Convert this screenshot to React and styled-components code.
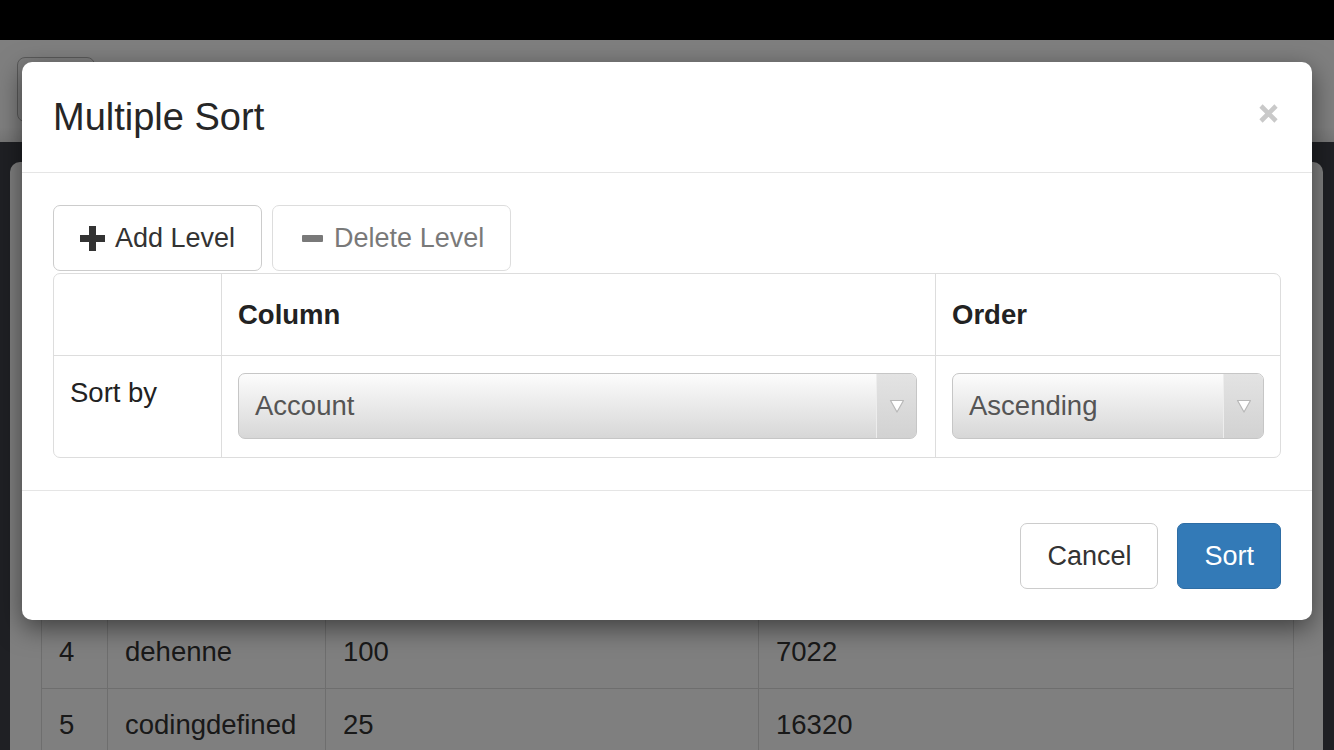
import React from "react";
import styled, { createGlobalStyle } from "styled-components";

const GlobalStyle = createGlobalStyle`
  html, body {
    margin: 0;
    padding: 0;
  }
  body {
    font-family: "Liberation Sans", Arial, Helvetica, sans-serif;
    background: #000;
    overflow: hidden;
  }
  * {
    box-sizing: border-box;
  }
`;

const accounts = [
  { id: 1, name: "johnsmith", amount: "500", balance: "12040" },
  { id: 2, name: "marylin", amount: "75", balance: "3380" },
  { id: 3, name: "peterpan", amount: "310", balance: "9105" },
  { id: 4, name: "dehenne", amount: "100", balance: "7022" },
  { id: 5, name: "codingdefined", amount: "25", balance: "16320" },
];

const PlusIcon = () => (
  <svg width="25" height="25" viewBox="0 0 25 25">
    <rect x="0" y="9" width="25" height="7" fill="currentColor" />
    <rect x="9" y="0" width="7" height="25" fill="currentColor" />
  </svg>
);

const MinusIcon = () => (
  <svg width="25" height="25" viewBox="0 0 25 25">
    <rect x="3" y="9" width="21" height="7" rx="1" fill="currentColor" />
  </svg>
);

const CloseIcon = () => (
  <svg width="19" height="19" viewBox="0 0 19 19">
    <path
      d="M2 2 L17 17 M17 2 L2 17"
      stroke="#c9c9c9"
      strokeWidth="4.6"
      strokeLinecap="butt"
    />
  </svg>
);

const Caret = () => (
  <svg width="16" height="15" viewBox="0 0 16 15">
    <polygon
      points="1.5,1.5 14.5,1.5 8,13"
      fill="#fff"
      stroke="#b8b8b8"
      strokeWidth="1.2"
      strokeLinejoin="round"
    />
  </svg>
);

const SelectBox = ({ value, width }) => (
  <Select $width={width}>
    <SelectValue>{value}</SelectValue>
    <SelectArrow>
      <Caret />
    </SelectArrow>
  </Select>
);

const App = () => {
  return (
    <Screen>
      <GlobalStyle />
      <StatusBar />
      <NavBar>
        <NavButton />
      </NavBar>
      <Main>
        <Card>
          <CardToolbar>
            <NavButton />
          </CardToolbar>
          <DataTable>
            <colgroup>
              <col style={{ width: 66 }} />
              <col style={{ width: 218 }} />
              <col style={{ width: 433 }} />
              <col style={{ width: 535 }} />
            </colgroup>
            <thead>
              <tr>
                <th>#</th>
                <th>Account</th>
                <th>Amount</th>
                <th>Balance</th>
              </tr>
            </thead>
            <tbody>
              {accounts.map((a) => (
                <tr key={a.id}>
                  <td>{a.id}</td>
                  <td>{a.name}</td>
                  <td>{a.amount}</td>
                  <td>{a.balance}</td>
                </tr>
              ))}
            </tbody>
          </DataTable>
        </Card>
      </Main>

      <Overlay>
        <Modal>
          <ModalHeader>
            <ModalTitle>Multiple Sort</ModalTitle>
            <CloseButton aria-label="Close">
              <CloseIcon />
            </CloseButton>
          </ModalHeader>
          <ModalBody>
            <LevelBar>
              <Button>
                <PlusIcon />
                Add Level
              </Button>
              <Button disabled>
                <MinusIcon />
                Delete Level
              </Button>
            </LevelBar>
            <SortGrid>
              <HeadCell $first />
              <HeadCell>Column</HeadCell>
              <HeadCell>Order</HeadCell>
              <BodyCell $first>
                <RowLabel>Sort by</RowLabel>
              </BodyCell>
              <BodyCell>
                <SelectBox value="Account" width="679px" />
              </BodyCell>
              <BodyCell>
                <SelectBox value="Ascending" width="100%" />
              </BodyCell>
            </SortGrid>
          </ModalBody>
          <ModalFooter>
            <Button>Cancel</Button>
            <Button $primary>Sort</Button>
          </ModalFooter>
        </Modal>
      </Overlay>
    </Screen>
  );
};

export default App;

const Screen = styled.div`
  width: 1334px;
  height: 750px;
  display: flex;
  flex-direction: column;
  overflow: hidden;
  position: relative;
`;

const StatusBar = styled.div`
  height: 40px;
  background: #000;
  flex-shrink: 0;
`;

const NavBar = styled.div`
  height: 102px;
  flex-shrink: 0;
  background: linear-gradient(#ffffff 85%, #ececec);
  padding: 17px;
`;

const NavButton = styled.div`
  width: 78px;
  height: 65px;
  border: 1px solid #b4b4b4;
  border-radius: 8px;
  background: #fafafa;
`;

const Main = styled.div`
  flex: 1;
  background: #3e4148;
  padding: 20px 11px 0 10px;
`;

const Card = styled.div`
  height: 100%;
  background: #fff;
  border-radius: 10px 10px 0 0;
  padding: 31px 30px 0 31px;
`;

const CardToolbar = styled.div`
  height: 130px;
`;

const DataTable = styled.table`
  width: 1252px;
  table-layout: fixed;
  border-collapse: collapse;
  font-size: 27.5px;
  color: #333;

  th,
  td {
    height: 73px;
    padding: 0 17px;
    border: 1px solid #ddd;
    text-align: left;
    white-space: nowrap;
  }
  th {
    font-weight: bold;
  }
`;

const Overlay = styled.div`
  position: absolute;
  inset: 0;
  background: rgba(0, 0, 0, 0.5);
  display: flex;
  justify-content: center;
  align-items: flex-start;
  padding-top: 62px;
`;

const Modal = styled.div`
  width: 1290px;
  background: #fff;
  border-radius: 10px;
  box-shadow: 0 8px 26px rgba(0, 0, 0, 0.5);
  color: #333;
`;

const ModalHeader = styled.div`
  height: 111px;
  display: flex;
  align-items: center;
  justify-content: space-between;
  padding: 0 34px 0 31px;
  border-bottom: 1px solid #e5e5e5;
`;

const ModalTitle = styled.h4`
  margin: 0;
  font-size: 38px;
  font-weight: 500;
  line-height: 1;
  color: #262626;
`;

const CloseButton = styled.button`
  width: 19px;
  height: 19px;
  padding: 0;
  border: 0;
  background: none;
  display: flex;
  margin-bottom: 7px;
`;

const ModalBody = styled.div`
  padding: 32px 31px 32px;
`;

const LevelBar = styled.div`
  display: flex;
  gap: 10px;
  margin-bottom: 2px;
`;

const Button = styled.button`
  height: 66px;
  display: inline-flex;
  align-items: center;
  gap: 10px;
  padding: 0 26px;
  font-family: inherit;
  font-size: 27px;
  border-radius: 7px;
  border: 1px solid ${(p) => (p.$primary ? "#2e6da4" : "#ccc")};
  background: ${(p) => (p.$primary ? "#337ab7" : "#fff")};
  color: ${(p) => (p.$primary ? "#fff" : "#333")};

  &:disabled {
    opacity: 0.65;
  }
`;

const SortGrid = styled.div`
  display: grid;
  grid-template-columns: 167px 714px 345px;
  border: 1px solid #ddd;
  border-radius: 7px;
  font-size: 27.5px;
`;

const HeadCell = styled.div`
  height: 81px;
  display: flex;
  align-items: center;
  padding: 0 16px;
  font-weight: bold;
  color: #222;
  border-left: ${(p) => (p.$first ? "0" : "1px solid #ddd")};
`;

const BodyCell = styled.div`
  padding: 17px 16px 18px;
  border-top: 1px solid #ddd;
  border-left: ${(p) => (p.$first ? "0" : "1px solid #ddd")};
`;

const RowLabel = styled.div`
  line-height: 40px;
  color: #222;
`;

const Select = styled.div`
  width: ${(p) => p.$width};
  height: 66px;
  display: flex;
  border: 1px solid #c6c6c6;
  border-radius: 7px;
  background: linear-gradient(#fcfcfc, #d7d7d7);
  overflow: hidden;
`;

const SelectValue = styled.div`
  flex: 1;
  padding-left: 16px;
  line-height: 64px;
  color: #555;
`;

const SelectArrow = styled.div`
  width: 40px;
  display: flex;
  align-items: center;
  justify-content: center;
  background: linear-gradient(#e3e3e3, #d2d2d2);
  border-left: 1px solid #ededed;
`;

const ModalFooter = styled.div`
  display: flex;
  justify-content: flex-end;
  gap: 19px;
  padding: 32px 31px 31px;
  border-top: 1px solid #e5e5e5;
`;
